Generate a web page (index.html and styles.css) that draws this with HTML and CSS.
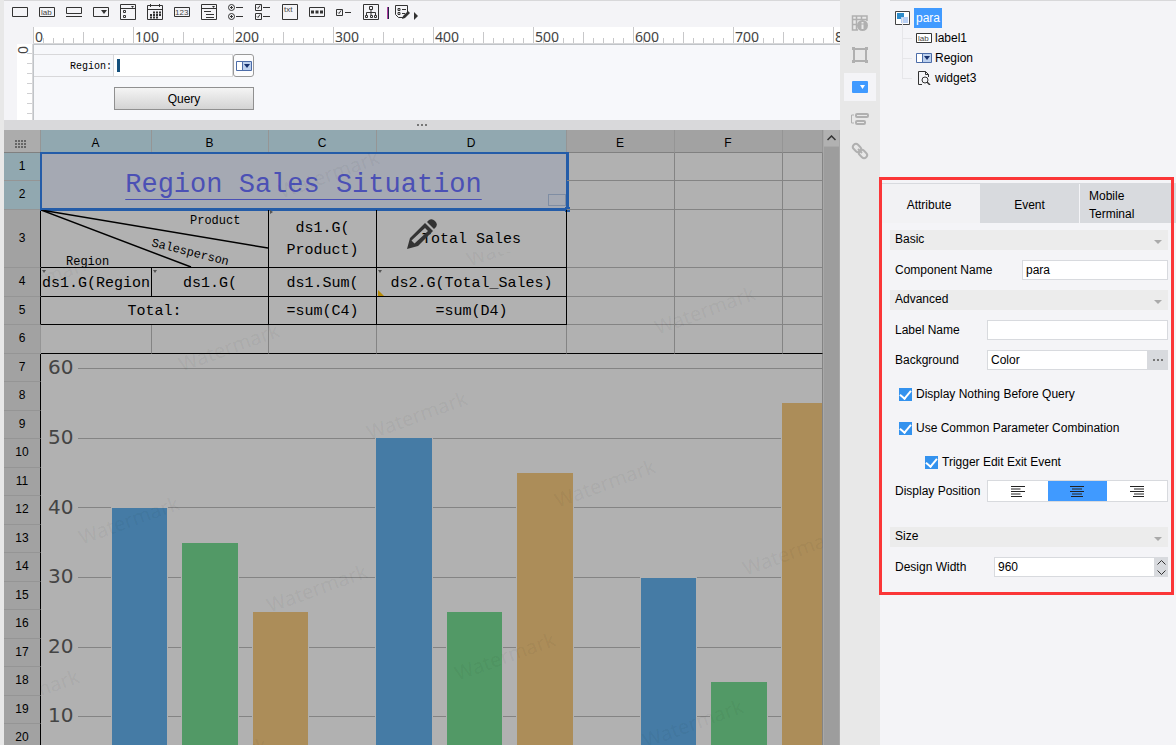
FILE: index.html
```
<!DOCTYPE html>
<html lang="en">
<head>
<meta charset="utf-8">
<title>Report Designer</title>
<link rel="stylesheet" href="styles.css">
</head>
<body>
<main class="workspace">
  <div class="toolbar" role="toolbar" aria-label="Widgets">
    <button class="tool" aria-label="Text box"><svg viewBox="0 0 16 16"><path d="M.5 3.500h15v9H.5z"/></svg></button>
    <button class="tool" aria-label="Label"><svg viewBox="0 0 16 16"><path d="M.5 3.500h15v9H.5z"/><text x="2" y="11">lab</text></svg></button>
    <button class="tool" aria-label="Button"><svg viewBox="0 0 16 16"><path d="M.5 3.500h15v6H.5zM0 12.500h16"/></svg></button>
    <button class="tool" aria-label="Drop-down box"><svg viewBox="0 0 16 16"><path d="M.5 3.500h15v9H.5z"/><path class="solid" d="M8 6h6l-3 4z"/></svg></button>
    <button class="tool" aria-label="Check drop-down"><svg viewBox="0 0 16 16"><path d="M.5.5h15v15H.5zM.5 4.500h15M3.500 6.500h2v2h-2zM3.500 11.500h2v2h-2z"/><path class="solid" d="M11 2h3l-1.500 2z"/></svg></button>
    <button class="tool" aria-label="Date"><svg viewBox="0 0 16 16"><path d="M.5 1.500h15v14H.5zM.5 5.500h15M3.500 0v3M12.500 0v3"/><path class="dots" d="M6 8.500h8M3 11h11M3 13.500h8"/></svg></button>
    <button class="tool" aria-label="Number"><svg viewBox="0 0 16 16"><path d="M.5 3.500h15v9H.5z"/><text x="1" y="11">123</text></svg></button>
    <button class="tool" aria-label="Tree drop-down"><svg viewBox="0 0 16 16"><path d="M.5.5h15v15H.5zM.5 4.500h15M3 7.500h7M5 10.500h8M5 13.500h8"/><path class="solid" d="M11 2h3l-1.500 2z"/></svg></button>
    <button class="tool" aria-label="Radio group"><svg viewBox="0 0 16 16"><circle cx="3.500" cy="3.500" r="3"/><circle cx="3.500" cy="12.500" r="3"/><path d="M8 3.500h7M8 12.500h7M2 3.500h3M3.500 2v3M2 12.500h3M3.500 11v3"/></svg></button>
    <button class="tool" aria-label="Check box group"><svg viewBox="0 0 16 16"><path d="M.5.5h6v6h-6zM.5 9.500h6v6h-6zM8 3.500h7M8 12.500h7M2 3.500l1 1 2-3M2 12.500l1 1 2-3"/></svg></button>
    <button class="tool" aria-label="Text area"><svg viewBox="0 0 16 16"><path d="M.5.5h15v15H.5z"/><text x="2" y="8">txt</text></svg></button>
    <button class="tool" aria-label="Password"><svg viewBox="0 0 16 16"><path d="M.5 3.500h15v9H.5z"/><path class="solid" d="M2 6.500h3v3H2zM6.500 6.500h3v3h-3zM11 6.500h3v3h-3z"/></svg></button>
    <button class="tool" aria-label="Check box"><svg viewBox="0 0 16 16"><path d="M.5 5.500h6v6h-6zM9 8.500h6M2 8.500l1 1 2-3"/></svg></button>
    <button class="tool" aria-label="Tree"><svg viewBox="0 0 16 16"><path d="M.5.5h15v15H.5zM6.500 2.500h3v3h-3zM8 6v3M3.500 11V8.500h9V11M8 8.500V11M2.500 11.500h2v2h-2zM7.500 11.500h2v2h-2zM11.500 11.500h2v2h-2z"/></svg></button>
    <span class="tool-rule"></span>
    <button class="tool tool-last" aria-label="Preset widgets"><svg viewBox="0 0 16 16"><path d="M8 13.500H3.500l-3-3v-9h12V8M3 4.500h2v2H3zM3 8.500h2v2H3zM7 5.500h4M7 9.500h3"/><path class="solid" d="M13 7l2 2-5 5-3 1 1-3z"/></svg></button>
    <button class="tool tool-more" aria-label="More"><svg viewBox="0 0 4 16"><path class="solid" d="M0 8l4 4-4 4z"/></svg></button>
  </div>

  <section class="param" aria-label="Parameter pane">
    <div class="ruler-x"><span>0</span><span>100</span><span>200</span><span>300</span><span>400</span><span>500</span><span>600</span><span>700</span><span>800</span></div>
    <div class="ruler-y"><span>0</span></div>
    <form class="canvas">
      <label class="canvas-label" for="region">Region:</label>
      <input class="canvas-input" id="region" type="text">
      <button class="canvas-drop" type="button" aria-label="Open list"><svg width="16" height="10" viewBox="0 0 16 10"><path fill="#bcd0ee" stroke="#4c6ca8" d="M.5.5h15v9H.5z"/><path fill="#fff" d="M1 1h5v8H1z"/><path stroke="#4c6ca8" d="M6.500 0v10"/><path fill="#16306e" d="M8 3h6l-3 4z"/></svg></button>
      <button class="canvas-query" type="button">Query</button>
    </form>
  </section>
  <div class="splitter"><i></i><i></i><i></i></div>

  <section class="sheet">
    <div class="grid-wrap">
    <table class="grid">
      <colgroup><col class="c-head"><col class="c-a"><col class="c-b"><col class="c-e"><col class="c-d"><col class="c-e"><col class="c-e"><col></colgroup>
      <thead>
        <tr class="head"><th class="corner"><svg width="11" height="8" viewBox="0 0 11 8"><path d="M0 1h11M0 4h11M0 7h11" stroke="#666" stroke-width="2" stroke-dasharray="2 1"/></svg></th><th class="on">A</th><th class="on">B</th><th class="on">C</th><th class="on">D</th><th>E</th><th>F</th><th></th></tr>
      </thead>
      <tbody>
        <tr class="short"><th class="on">1</th><td class="title" colspan="4" rowspan="2"><a href="#report">Region Sales Situation</a><span class="selection"></span></td><td></td><td></td><td></td></tr>
        <tr class="tall"><th class="on">2</th><td></td><td></td><td></td></tr>
        <tr class="double ink"><th>3</th>
          <td class="slant" colspan="2"><svg width="227" height="57" viewBox="0 0 227 57"><path d="M0 0L227 38M0 0L150 57"/><text x="149" y="14">Product</text><text transform="translate(110 36) rotate(14)">Salesperson</text><text x="25" y="55">Region</text></svg></td>
          <td class="right-mark">ds1.G(<br>Product)</td>
          <td class="total">Total Sales<svg class="pencil" width="30" height="30" viewBox="0 0 30 30"><path fill="#333" fill-rule="evenodd" d="M0 30l3-11L18 4l8 8L11 27zM4.500 21.500l3 3L21 12l-3-3z"/><path fill="#333" d="M20 3l2-2q3-2 6 1t1 6l-2 2z"/></svg></td>
          <td></td><td></td><td></td></tr>
        <tr class="tall ink"><th>4</th><td class="down-mark">ds1.G(Region</td><td class="down-mark">ds1.G(</td><td>ds1.Sum(</td><td class="down-mark corner-mark">ds2.G(Total_Sales)</td><td></td><td></td><td></td></tr>
        <tr class="short ink"><th>5</th><td colspan="2">Total:</td><td>=sum(C4)</td><td>=sum(D4)</td><td></td><td></td><td></td></tr>
        <tr class="tall last"><th>6</th><td></td><td></td><td></td><td></td><td></td><td></td><td></td></tr>
        <tr class="short plot"><th>7</th>
          <td class="chart" colspan="7" rowspan="14">
            <svg width="100%" height="398">
              <g class="rules"><path d="M37 14.500h2000M37 84.500h2000M37 153.500h2000M37 223.500h2000M37 293.500h2000M37 362.500h2000"/></g>
              <g class="ticks"><text x="7" y="20">60</text><text x="7" y="90">50</text><text x="7" y="160">40</text><text x="7" y="229">30</text><text x="7" y="299">20</text><text x="7" y="368">10</text></g>
              <g class="bars blue"><rect x="70.500" y="153.500" width="56" height="260"/><rect x="334.500" y="83.500" width="57" height="330"/><rect x="599.500" y="223.500" width="56" height="190"/></g>
              <g class="bars green"><rect x="140.500" y="188.500" width="57" height="220"/><rect x="405.500" y="257.500" width="56" height="150"/><rect x="669.500" y="327.500" width="57" height="90"/></g>
              <g class="bars tan"><rect x="211.500" y="257.500" width="56" height="150"/><rect x="475.500" y="118.500" width="57" height="290"/><rect x="740.500" y="48.500" width="57" height="360"/></g>
            </svg>
          </td></tr>
        <tr class="tall plot"><th>8</th></tr><tr class="short plot"><th>9</th></tr>
        <tr class="tall plot"><th>10</th></tr><tr class="short plot"><th>11</th></tr>
        <tr class="tall plot"><th>12</th></tr><tr class="short plot"><th>13</th></tr>
        <tr class="tall plot"><th>14</th></tr><tr class="short plot"><th>15</th></tr>
        <tr class="tall plot"><th>16</th></tr><tr class="short plot"><th>17</th></tr>
        <tr class="tall plot"><th>18</th></tr><tr class="short plot"><th>19</th></tr>
        <tr class="tall plot"><th>20</th></tr>
      </tbody>
    </table>
    <svg class="watermarks" aria-hidden="true">
      <clipPath id="below"><path d="M400 99h400v200H400z"/></clipPath>
      <text transform="translate(241 46) rotate(-20)">Watermark</text>
      <g clip-path="url(#below)"><text transform="translate(429 114) rotate(-20)">Watermark</text></g>
      <text transform="translate(617 182) rotate(-20)">Watermark</text>
      <text transform="translate(-47 151) rotate(-20)">Watermark</text>
      <text transform="translate(141 219) rotate(-20)">Watermark</text>
      <text transform="translate(329 287) rotate(-20)">Watermark</text>
      <text transform="translate(517 355) rotate(-20)">Watermark</text>
      <text transform="translate(705 423) rotate(-20)">Watermark</text>
      <text transform="translate(41 392) rotate(-20)">Watermark</text>
      <text transform="translate(229 460) rotate(-20)">Watermark</text>
      <text transform="translate(417 528) rotate(-20)">Watermark</text>
      <text transform="translate(605 595) rotate(-20)">Watermark</text>
      <text transform="translate(-59 565) rotate(-20)">Watermark</text>
      <text transform="translate(129 633) rotate(-20)">Watermark</text>
    </svg>
    </div>
    <div class="scrollbar"><button class="scroll-up" aria-label="Scroll up"><svg width="9" height="6" viewBox="0 0 9 6"><path d="M.5 5l4-4 4 4" fill="none" stroke="#333" stroke-width="1.500"/></svg></button><div class="thumb"></div></div>
  </section>
</main>

<nav class="rail" aria-label="Panels">
  <button aria-label="Cell attributes"><svg viewBox="0 0 18 18"><path d="M16 7V2H1.500v14H7M1 5.500h15M5.500 2v14M1 10.500h5M10.500 2v4" stroke-width="1.500"/><circle class="fill" cx="11.500" cy="11.500" r="5.500"/><path stroke="#e8e8e8" stroke-width="2" d="M11.500 8v1.500M11.500 10.500V15"/></svg></button>
  <button aria-label="Float element"><svg viewBox="0 0 18 18"><path d="M3 3h12v12H3z" stroke-width="2"/><path class="fill" d="M1 1h3v3H1zM14 1h3v3h-3zM1 14h3v3H1zM14 14h3v3h-3z"/></svg></button>
  <button class="active" aria-label="Widget settings"><svg viewBox="0 0 18 18"><rect x="1" y="3" width="16" height="12" rx="1" fill="#409aff" stroke="none"/><path fill="#fff" stroke="none" d="M9 7h5l-2.500 4z"/></svg></button>
  <button aria-label="Condition attributes"><svg viewBox="0 0 18 18"><path d="M3 5H.5v8H3" stroke-width="1"/><rect x="5" y="4" width="12" height="3" rx="1" stroke-width="2"/><rect x="5" y="11" width="9" height="3" rx="1" stroke-width="2"/></svg></button>
  <button aria-label="Hyperlink"><svg viewBox="0 0 18 18"><g stroke-width="2"><rect x="1.500" y="3" width="9" height="6" rx="3" transform="rotate(45 6 6)"/><rect x="7.500" y="9" width="9" height="6" rx="3" transform="rotate(45 12 12)"/><path d="M7 7l4 4"/></g></svg></button>
</nav>

<aside class="side">
  <ul class="tree">
    <li class="root"><svg width="15" height="14" viewBox="0 0 15 14"><path fill="#fff" stroke="#444" d="M.5.5h14v13H.5z"/><path fill="#2d8bc9" d="M2 2h7v6H2z"/><path fill="#b9d0f4" d="M6 6h7v6H6z"/></svg><span class="picked">para</span></li>
    <li><svg width="16" height="10" viewBox="0 0 16 10"><path fill="#fff" stroke="#333" d="M.5.5h15v9H.5z"/><text class="tiny" x="2" y="8">lab</text></svg><span>label1</span></li>
    <li><svg width="16" height="10" viewBox="0 0 16 10"><path fill="#bcd0ee" stroke="#4c6ca8" d="M.5.5h15v9H.5z"/><path fill="#fff" d="M1 1h5v8H1z"/><path stroke="#4c6ca8" d="M6.500 0v10"/><path fill="#16306e" d="M8 3h6l-3 4z"/></svg><span>Region</span></li>
    <li><svg width="16" height="14" viewBox="0 0 16 14"><path fill="none" stroke="#333" d="M6 13.500H2.500V.5h7l3 3V6M9.500.5v3h3"/><circle cx="9" cy="9" r="3" fill="none" stroke="#333"/><path stroke="#333" stroke-width="1.500" d="M11 11l3 3"/></svg><span>widget3</span></li>
  </ul>

  <section class="props">
    <div class="tabs" role="tablist">
      <button class="tab current" role="tab">Attribute</button><button class="tab" role="tab">Event</button><button class="tab left" role="tab">Mobile<br>Terminal</button>
    </div>
    <form class="fields">
      <h2>Basic</h2>
      <div class="row"><label for="name">Component Name</label><input id="name" class="w-name" type="text" value="para"></div>
      <h2>Advanced</h2>
      <div class="row"><label for="lname">Label Name</label><input id="lname" class="w-wide" type="text"></div>
      <div class="row"><label for="bg">Background</label><div class="w-wide combo"><input id="bg" type="text" value="Color"><button type="button" aria-label="Choose background"><i></i><i></i><i></i></button></div></div>
      <div class="checks">
        <label><input type="checkbox" checked>Display Nothing Before Query</label>
        <label><input type="checkbox" checked>Use Common Parameter Combination</label>
        <label class="nested"><input type="checkbox" checked>Trigger Edit Exit Event</label>
      </div>
      <div class="row position"><span class="name">Display Position</span>
        <div class="w-wide segmented">
          <button type="button" aria-label="Left"><svg width="14" height="11"><path d="M0 .5h14M0 3h9.500M0 5.500h14M0 8h9.500M0 10.500h11"/></svg></button>
          <button type="button" class="current" aria-label="Center"><svg width="14" height="11"><path d="M0 .5h14M2 3h10M0 5.500h14M2 8h10M1 10.500h12"/></svg></button>
          <button type="button" aria-label="Right"><svg width="14" height="11"><path d="M0 .5h14M4 3h10M0 5.500h14M4 8h10M3 10.500h11"/></svg></button>
        </div></div>
      <h2 class="spaced">Size</h2>
      <div class="row"><label for="dw">Design Width</label><div class="w-spin combo"><input id="dw" type="text" value="960"><span class="spin"><button type="button" aria-label="Increase"><svg width="9" height="5"><path d="M.5 4.500l4-4 4 4"/></svg></button><button type="button" aria-label="Decrease"><svg width="9" height="5"><path d="M.5.5l4 4 4-4"/></svg></button></span></div></div>
    </form>
  </section>
</aside>
</body>
</html>
```
FILE: styles.css
```
* { box-sizing: border-box; }
body { margin: 0; height: 100vh; display: flex; overflow: hidden; background: #e8e8e8; padding-left: 4px; font: 12px/18px "Liberation Sans", Arial, sans-serif; color: #000; }
button { margin: 0; padding: 0; border: 0; background: none; font: inherit; color: inherit; }
input { margin: 0; font: inherit; color: inherit; border-radius: 0; outline: 0; min-width: 0; }
svg { display: block; }

.workspace { flex: 1; min-width: 0; display: flex; flex-direction: column; background: #f4f4f7; }

/* Widget toolbar */
.toolbar { display: flex; gap: 11px; height: 27px; padding: 3px 8px 0; border-top: 1px solid #d8d8da; }
.tool, .tool svg { width: 16px; height: 16px; }
.tool svg { fill: none; stroke: #333; }
.tool .solid { fill: #333; stroke: none; }
.tool .dots { stroke-width: 2; stroke-dasharray: 2 1; }
.tool text, .tiny { font: 8px "Liberation Sans", sans-serif; fill: #444; stroke: none; }
.tool-rule { width: 2px; height: 12px; margin: 3px -5px 0 -3px; border-left: 1px solid #b040a0; background: #224; }
.tool-more, .tool-more svg { width: 4px; }
.tool-more { margin-left: -8px; }

/* Parameter pane */
.param { display: grid; grid-template: 17px 76px / 29px 1fr; }
.ruler-x { grid-column: 2; display: flex; overflow: hidden; border-bottom: 1px solid #d8d8da; background-color: #fff;
  background-image: linear-gradient(90deg, #c8c8ca 1px, transparent 1px), linear-gradient(90deg, #c8c8ca 1px, transparent 1px), linear-gradient(90deg, #c8c8ca 1px, transparent 1px);
  background-size: 100px 16px, 50px 11px, 10px 5px;
  background-position: 0 0, 0 5px, 0 11px;
  background-repeat: repeat-x; }
.ruler-x span { flex: 0 0 100px; padding-left: 2px; font: 14px/19px "Noto Sans", sans-serif; height: 19px; color: #444; }
.ruler-y { grid-column: 1; margin-left: 13px; background-color: #fff; border-right: 1px solid #d8d8da;
  background-image: linear-gradient(#d0d0d2 1px, transparent 1px);
  background-size: 5px 10px; background-position: 100% 9px; background-repeat: repeat-y; }
.ruler-y span { display: block; width: 12px; height: 8px; font: 14px/8px "Noto Sans", sans-serif; color: #444; transform: rotate(-90deg); }
.canvas { display: grid; grid-template-columns: 80px 119px 21px; grid-auto-rows: 23px; row-gap: 10px; padding-top: 9px; border-top: 1px solid #c0c4c8; border-left: 1px solid #c0c4c8; background: #f7f8fb; }
.canvas-label { border: 1px solid #d8d8da; border-left: 0; padding-right: 1px; text-align: right; font: 10px/23px "Liberation Mono", monospace; }
.canvas-input { border: 1px solid #d8d8da; border-left: 0; background: linear-gradient(#14507c, #14507c) 3px 4px / 3px 13px no-repeat #fff; }
.canvas-drop { display: grid; place-items: center; border: 1px solid #999; border-radius: 3px; background: #fcfcfd; }
.canvas-query { grid-column: 2 / 4; border: 1px solid #909090; background: linear-gradient(#f4f4f4, #d4d4d4); }
.splitter { height: 10px; display: flex; gap: 2px; justify-content: center; align-items: center; background: #d9d9db; }
.splitter i, .combo i { width: 2px; height: 2px; background: #777; }

/* Spreadsheet */
.sheet { flex: 1; min-height: 0; display: flex; overflow: hidden; background: #b1b1b1; }
.grid-wrap { flex: 1; min-width: 0; position: relative; overflow: hidden; }
.grid { width: 100%; table-layout: fixed; border-collapse: separate; border-spacing: 0; }
.c-head { width: 37px; } .c-a { width: 111px; } .c-b { width: 117px; } .c-d { width: 190px; } .c-e { width: 108px; }
.grid th, .grid td { padding: 0; border: 0 solid #848484; border-width: 0 1px 1px 0; text-align: center; vertical-align: middle; white-space: nowrap; }
.grid th { background: #a2a2a2; border-color: #959595; padding-bottom: 2px; font-weight: 400; line-height: 14px; }
.grid td { position: relative; padding-top: 3px; font: 15px/22px "Liberation Mono", monospace; }
.grid .head th { border-bottom-color: #808080; padding: 3px 1px 0 0; }
.grid .on { background: #91a8b0; }
.grid .head .corner { padding-right: 3px; background: #acacac; }
.corner svg { margin: 2px auto 0; }
.head { height: 23px; } .short { height: 28px; } .tall { height: 29px; } .double { height: 58px; }
.grid .ink th, .grid .plot th { border-right-color: #000; }
.grid .ink td:not(:nth-last-child(-n+3)) { border-color: #000; }
.grid .last td { border-bottom-color: #000; }
.grid .title { background: #a5a9b3; font-size: 27px; line-height: 32px; padding-top: 8px; }
.title a { color: #4b50b5; text-decoration: underline; text-decoration-thickness: 1px; text-underline-offset: 7px; }
.selection { position: absolute; inset: -1px -3px -2px -1px; border: 2px solid #245ca8; border-right-width: 3px; border-bottom-width: 3px; }
.selection::before { content: ""; position: absolute; right: 0; bottom: 2px; width: 16px; height: 10px; border: 1px solid #7f8da3; }
.selection::after { content: ""; position: absolute; right: -4px; bottom: -4px; width: 5px; height: 5px; background: #245ca8; }
.grid .slant, .grid .chart { padding: 0; }
.slant path { stroke: #000; stroke-width: 1.500; }
.slant text { font: 12px "Liberation Mono", monospace; }
.total .pencil { position: absolute; left: 30px; top: 9px; }
.down-mark::before, .right-mark::before { content: ""; position: absolute; left: 1px; top: 2px; border: 2px solid transparent; border-top: 3px solid #555; border-bottom: 0; }
.right-mark::before { top: 0; border: 2px solid transparent; border-left: 3px solid #555; border-right: 0; }
.corner-mark::after { content: ""; position: absolute; left: 1px; bottom: 0; border-top: 6px solid transparent; border-left: 6px solid #b88c08; }
.grid .chart { vertical-align: top; }
.rules { stroke: #848484; }
.ticks { font: 20px "DejaVu Sans", Verdana, sans-serif; fill: #444; }
.bars { stroke: #b1b1b1; }
.blue { fill: #457ba5; } .green { fill: #529966; } .tan { fill: #ac8d59; }
.watermarks { position: absolute; left: 37px; top: 23px; width: calc(100% - 37px); height: calc(100% - 23px); pointer-events: none; font: 20px "Noto Sans", sans-serif; fill: rgba(0, 0, 0, .05); }
.scrollbar { width: 17px; display: flex; flex-direction: column; padding: 0 1px; background: #a8a8a8; }
.scroll-up { height: 16px; display: grid; place-items: center; background: #b1b1b1; }
.thumb { flex: 1; margin-top: 1px; background: #9d9d9d; }

/* Panel switcher */
.rail { width: 40px; padding: 9px 4px; display: flex; flex-direction: column; gap: 4px; }
.rail button { height: 28px; display: grid; place-items: center; }
.rail .active { background: #f4f4f7; }
.rail svg { width: 18px; height: 18px; fill: none; stroke: #b0b0b0; }
.rail .fill { fill: #b0b0b0; stroke: none; }

/* Widget tree */
.side { width: 296px; background: #f4f4f7; }
.tree { height: 177px; margin: 0 0 0 10px; padding: 7px 0 0 5px; border-top: 1px solid #d8d8da; list-style: none; }
.tree li { display: flex; align-items: center; gap: 4px; height: 20px; margin-left: 7px; }
.tree li:not(.root)::before { content: ""; width: 9px; height: 20px; margin-bottom: 20px; border: 1px solid #e6e6e9; border-width: 0 0 1px 1px; }
.tree .root { margin-left: 0; }
.tree span { margin-left: -1px; }
.tree .picked { margin-left: 0; padding: 1px 2px; background: #409aff; color: #fff; }

/* Property panel */
.props { position: relative; padding: 6px 0 18px 2px; }
.props::after { content: ""; position: absolute; inset: 0 2px 0 -1px; border: 3px solid #fb3638; pointer-events: none; }
.tabs { display: grid; grid-template-columns: 98px 99px 1fr; height: 37px; border-top: 1px solid #d8dade; }
.tab { padding-top: 3px; background: #d8dade; }
.tab.current { padding-right: 4px; background: #f2f2f4; }
.tab.left { padding-left: 9px; border-left: 1px solid #f4f4f7; text-align: left; }
.fields { margin: 10px 8px 0; }
h2 { position: relative; height: 20px; margin: 10px 0; padding-left: 5px; background: #ececec; font: inherit; }
h2::after { content: ""; position: absolute; right: 6px; bottom: 6px; border: 4px solid transparent; border-top-color: #aaa; border-bottom: 0; }
.row { display: flex; align-items: center; justify-content: space-between; height: 20px; margin-top: 10px; padding-left: 5px; }
.row label, .name { white-space: nowrap; }
.row input { height: 20px; padding: 0 3px; border: 1px solid #d8dade; background: #fff; }
.w-name { width: 146px; } .w-wide { width: 181px; } .w-spin { width: 174px; }
.combo { display: flex; }
.combo input { flex: 1; border-right: 0; }
.combo > button { width: 21px; display: flex; gap: 2px; justify-content: center; align-items: center; background: #d8dade; }
.spin { width: 14px; display: grid; background: #d8dade; }
.spin button { display: grid; place-items: center; }
.spin svg { fill: none; stroke: #333; }
.checks { display: grid; gap: 14px; padding: 14px 9px 8px; }
.checks label { display: flex; align-items: center; gap: 4px; height: 20px; white-space: nowrap; }
.checks .nested { padding-left: 26px; }
.checks input { appearance: none; width: 13px; height: 13px; display: grid; place-items: center; background: #3392ee; }
.checks input::after { content: ""; width: 5px; height: 9px; margin-bottom: 2px; border: solid #fff; border-width: 0 2px 2px 0; transform: rotate(40deg); }
.row.position { height: 22px; margin-top: 0; }
.segmented { height: 22px; display: grid; grid-template-columns: repeat(3, 1fr); border: 1px solid #d8dade; background: #fff; }
.segmented button { display: grid; place-items: center; }
.segmented .current { background: #409aff; }
.segmented svg { stroke: #222; }
h2.spaced { margin-top: 25px; }
```
